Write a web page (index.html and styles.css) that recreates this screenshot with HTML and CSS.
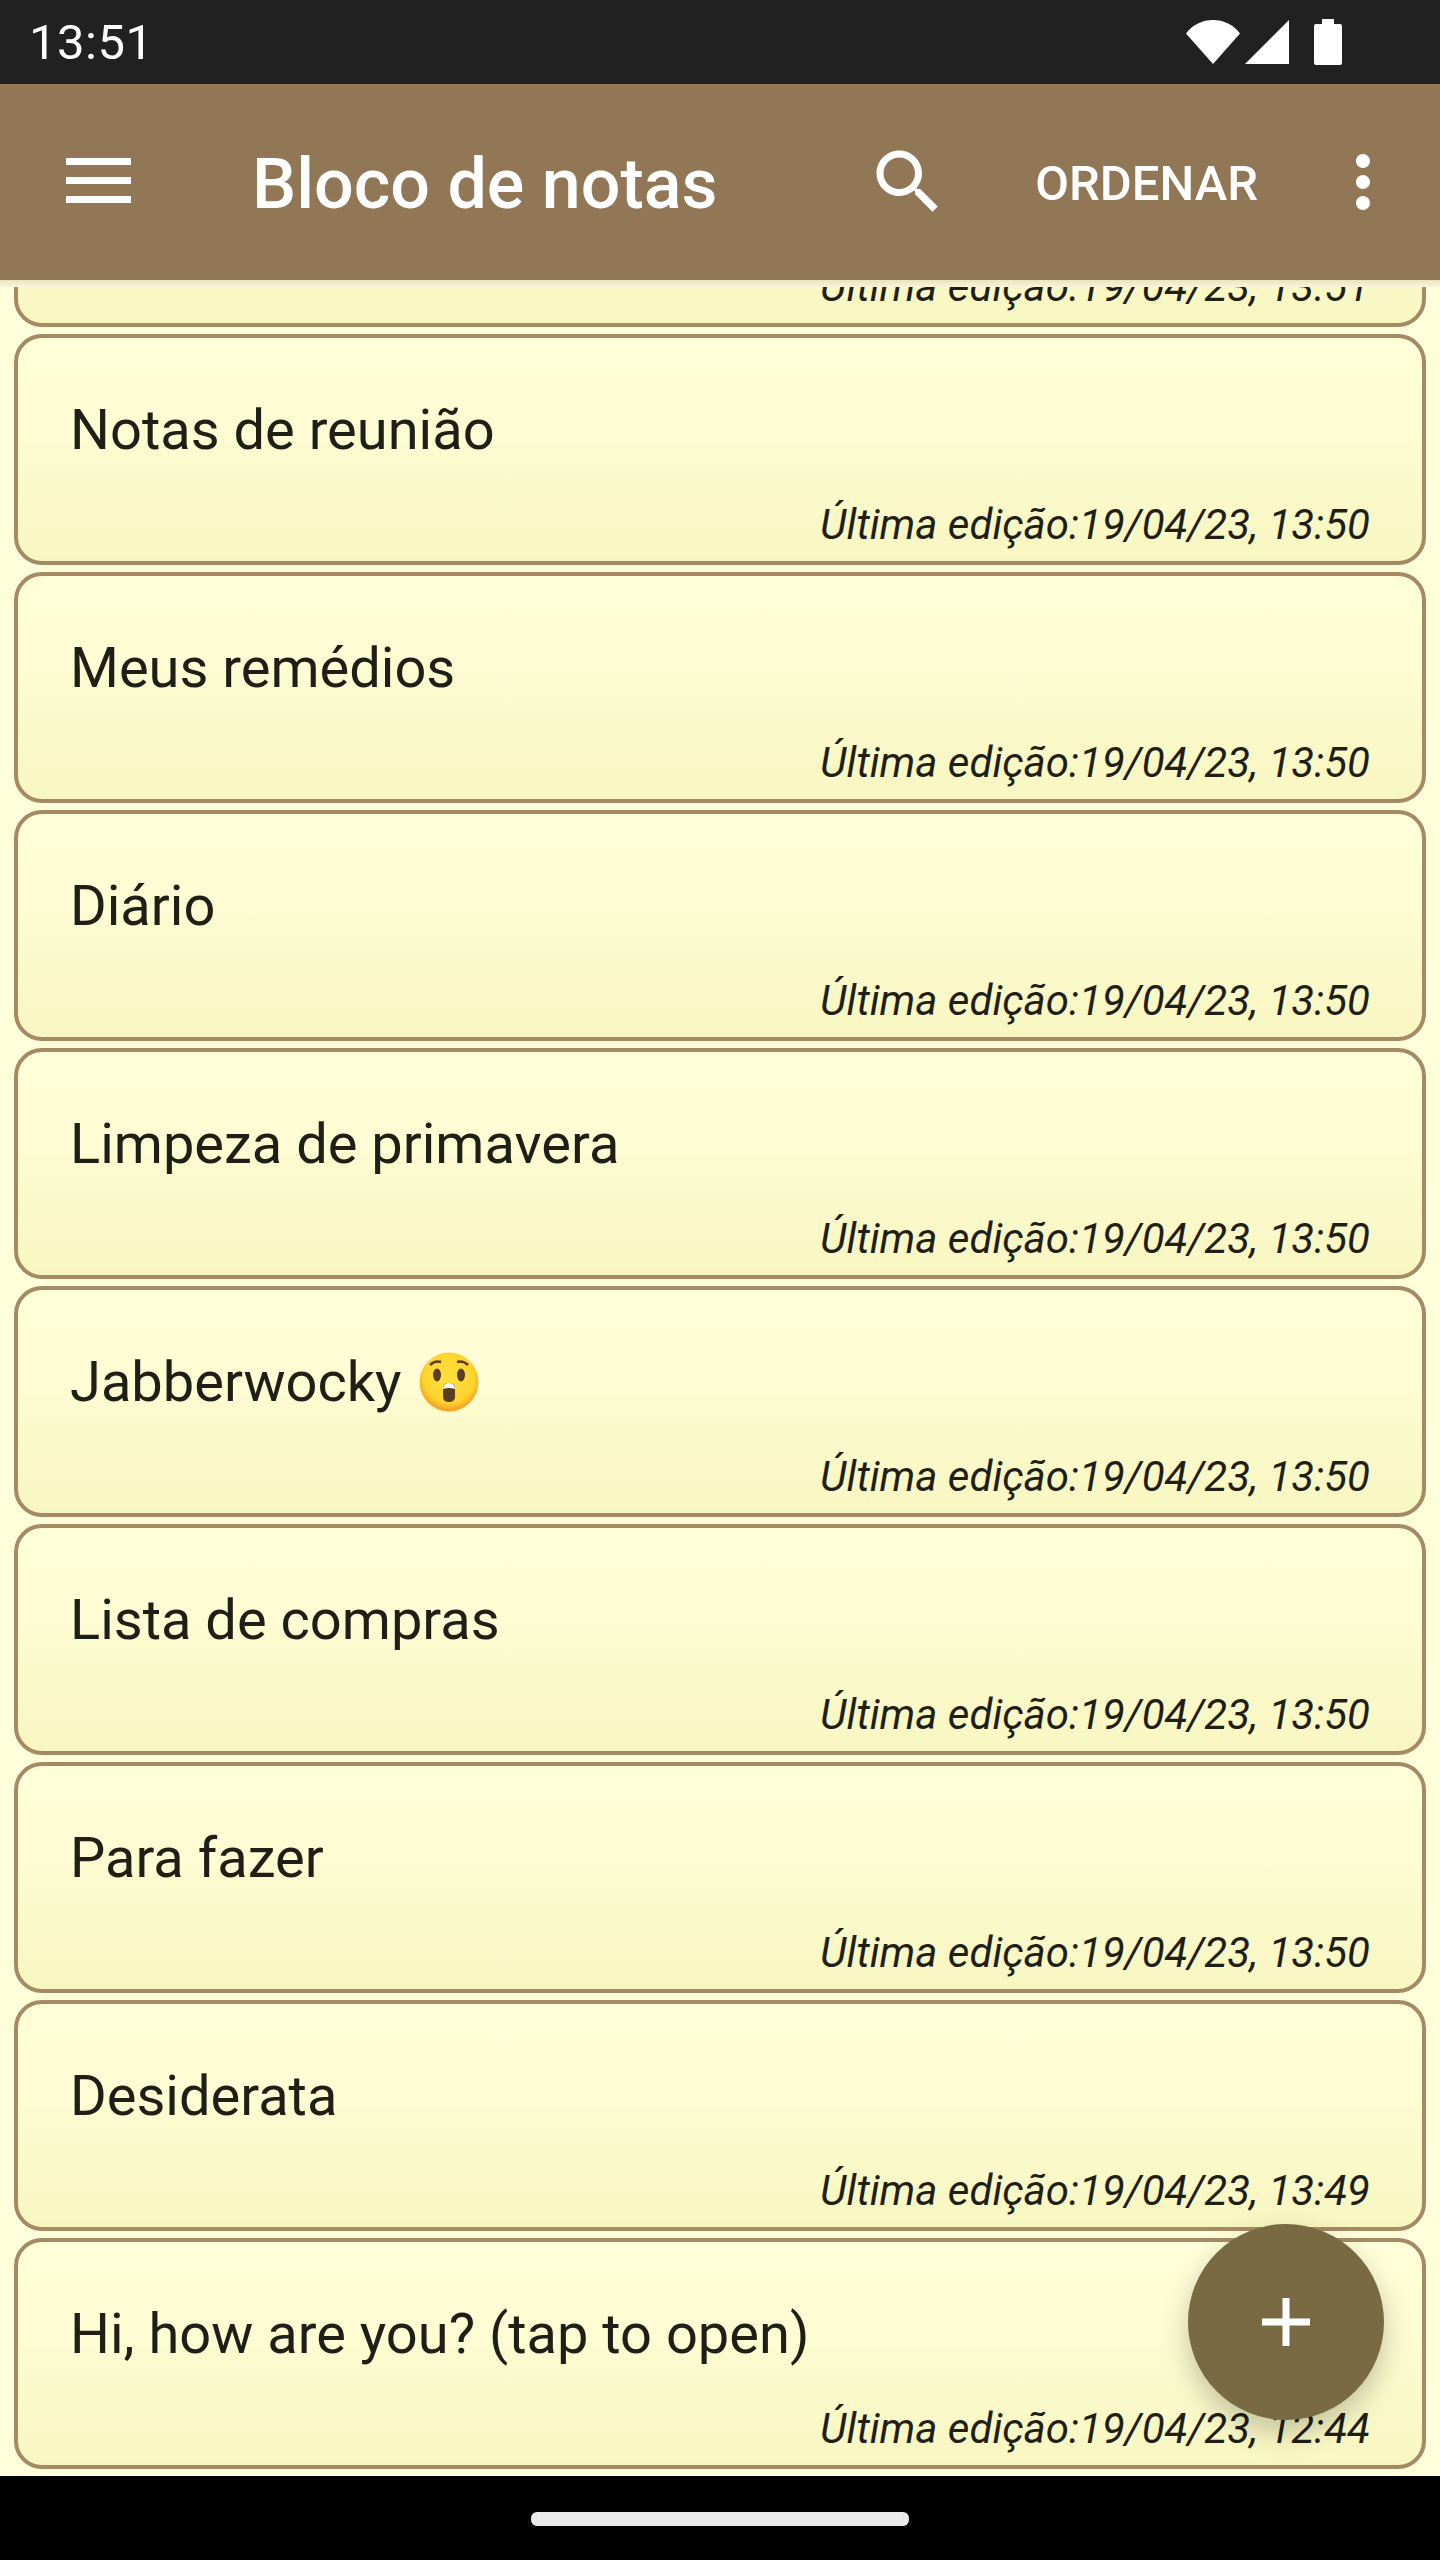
FILE: index.html
```html
<!DOCTYPE html>
<html lang="pt">
<head>
    <meta charset="UTF-8">
    <meta name="viewport" content="width=device-width, initial-scale=1.0">
    <title>Bloco de notas</title>
    <link rel="stylesheet" href="styles.css">
</head>
<body>
    <div class="screen">

        <!-- Status bar -->
        <div class="status-bar">
            <span class="status-time">13:51</span>
            <div class="status-icons">
                <svg class="wifi-icon" width="54" height="46" viewBox="0 0 54 46"><path d="M0 14.500C7 5.500 16 1 27 1s20 4.500 27 13.500L27 45z" fill="#fff"/></svg>
                <svg class="signal-icon" width="44" height="44" viewBox="0 0 44 44"><path d="M44 0v44H0z" fill="#fff"/></svg>
                <svg class="battery-icon" width="28" height="46" viewBox="0 0 28 46"><path d="M8 0h12v5h6a2 2 0 0 1 2 2v37a2 2 0 0 1-2 2H2a2 2 0 0 1-2-2V7a2 2 0 0 1 2-2h6z" fill="#fff"/></svg>
            </div>
        </div>

        <!-- Toolbar -->
        <div class="toolbar">
            <svg class="menu-icon" width="84" height="84" viewBox="0 0 84 84"><path d="M10 18h65v7H10zM10 37h65v7H10zM10 56h65v7H10z" fill="#fff"/></svg>
            <h1 class="toolbar-title">Bloco de notas</h1>
            <svg class="search-icon" width="84" height="84" viewBox="0 0 24 24"><path d="M15.500 14h-.79l-.28-.27C15.410 12.590 16 11.110 16 9.500 16 5.910 13.090 3 9.500 3S3 5.910 3 9.500 5.910 16 9.500 16c1.610 0 3.090-.59 4.230-1.570l.27.28v.79l5 4.990L20.490 19l-4.990-5zm-6 0C7.010 14 5 11.990 5 9.500S7.010 5 9.500 5 14 7.010 14 9.500 11.990 14 9.500 14z" fill="#fff"/></svg>
            <span class="toolbar-action">ORDENAR</span>
            <svg class="more-icon" width="84" height="84" viewBox="0 0 24 24"><path d="M12 8c1.100 0 2-.9 2-2s-.9-2-2-2-2 .9-2 2 .9 2 2 2zm0 2c-1.100 0-2 .9-2 2s.9 2 2 2 2-.9 2-2-.9-2-2-2zm0 6c-1.100 0-2 .9-2 2s.9 2 2 2 2-.9 2-2-.9-2-2-2z" fill="#fff"/></svg>
        </div>
        <div class="toolbar-shadow"></div>

        <!-- Notes, the list is scrolled so the first card is cut off at the top -->
        <div class="note-list">
            <div class="note">
                <span class="note-date">Última edição:19/04/23, 13:51</span>
            </div>
            <div class="note">
                <span class="note-title">Notas de reunião</span>
                <span class="note-date">Última edição:19/04/23, 13:50</span>
            </div>
            <div class="note">
                <span class="note-title">Meus remédios</span>
                <span class="note-date">Última edição:19/04/23, 13:50</span>
            </div>
            <div class="note">
                <span class="note-title">Diário</span>
                <span class="note-date">Última edição:19/04/23, 13:50</span>
            </div>
            <div class="note">
                <span class="note-title">Limpeza de primavera</span>
                <span class="note-date">Última edição:19/04/23, 13:50</span>
            </div>
            <div class="note">
                <span class="note-title">Jabberwocky
                    <svg class="emoji" width="66" height="66" viewBox="0 0 66 66">
                        <defs>
                            <radialGradient id="emojiFace" cx="50%" cy="42%" r="55%">
                                <stop offset="0%" stop-color="#fde13a"/>
                                <stop offset="78%" stop-color="#fdd32f"/>
                                <stop offset="100%" stop-color="#f5a623"/>
                            </radialGradient>
                        </defs>
                        <circle cx="33" cy="33" r="29.500" fill="url(#emojiFace)"/>
                        <ellipse cx="21" cy="26" rx="4" ry="6.500" fill="#5a3f1e"/>
                        <ellipse cx="45" cy="26" rx="4" ry="6.500" fill="#5a3f1e"/>
                        <path d="M14 16c3-3 7-4 11-3M41 13c4-1 8 0 11 3" fill="none" stroke="#5a3f1e" stroke-width="2.500"/>
                        <path d="M27 39c0-3 2.500-5 6-5s6 2 6 5v9c0 3-2.500 5-6 5s-6-2-6-5z" fill="#5a3f1e"/>
                        <path d="M27 40c0-3.500 2.500-6 6-6s6 2.500 6 6c-3.500-1.500-8.500-1.500-12 0z" fill="#fff"/>
                    </svg>
                </span>
                <span class="note-date">Última edição:19/04/23, 13:50</span>
            </div>
            <div class="note">
                <span class="note-title">Lista de compras</span>
                <span class="note-date">Última edição:19/04/23, 13:50</span>
            </div>
            <div class="note">
                <span class="note-title">Para fazer</span>
                <span class="note-date">Última edição:19/04/23, 13:50</span>
            </div>
            <div class="note">
                <span class="note-title">Desiderata</span>
                <span class="note-date">Última edição:19/04/23, 13:49</span>
            </div>
            <div class="note">
                <span class="note-title">Hi, how are you? (tap to open)</span>
                <span class="note-date">Última edição:19/04/23, 12:44</span>
            </div>
        </div>

        <!-- Add note button -->
        <button class="fab" type="button">
            <svg width="48" height="48" viewBox="0 0 48 48"><path d="M20.500 0h7v20.500H48v7H27.500V48h-7V27.500H0v-7h20.500z" fill="#fff"/></svg>
        </button>

        <!-- Navigation bar -->
        <div class="nav-bar">
            <div class="nav-handle"></div>
        </div>
    </div>
</body>
</html>
```

FILE: styles.css
```css
html, body {
    margin: 0;
    padding: 0;
}
body {
    font-family: Roboto, "Liberation Sans", sans-serif;
    background-color: #000;
}
.screen {
    position: relative;
    display: flex;
    flex-direction: column;
    width: 1440px;
    height: 2560px;
    overflow: hidden;
    background-color: #fefedb;
}
.status-bar {
    display: flex;
    align-items: center;
    justify-content: space-between;
    flex-shrink: 0;
    height: 84px;
    padding: 0 98px 0 29px;
    box-sizing: border-box;
    background-color: #212121;
}
.status-time {
    font-size: 49px;
    letter-spacing: 0.5px;
    color: #fff;
}
.status-icons {
    display: flex;
    align-items: center;
    gap: 5px;
}
.battery-icon {
    margin-left: 20px;
}
.toolbar {
    display: flex;
    align-items: center;
    flex-shrink: 0;
    height: 196px;
    padding: 0 35px 0 56px;
    box-sizing: border-box;
    background-color: #917755;
}
.toolbar-title {
    margin: 0 0 0 112px;
    padding-top: 4px;
    font-size: 70px;
    font-weight: 500;
    color: #fff;
}
.search-icon {
    margin-left: auto;
}
.toolbar-action {
    margin: 0 63px 0 85px;
    padding-top: 2px;
    font-size: 49px;
    font-weight: 500;
    color: #fff;
}
.toolbar-shadow {
    flex-shrink: 0;
    height: 7px;
    background: linear-gradient(#e7e3c5, #f8f6d2);
}
.note-list {
    display: flex;
    flex-direction: column;
    justify-content: flex-end;
    gap: 7px;
    flex: 1;
    min-height: 0;
    padding: 0 14px 7px;
    overflow: hidden;
}
.note {
    display: flex;
    flex-direction: column;
    flex-shrink: 0;
    height: 231px;
    padding: 59px 52px 12px 52px;
    box-sizing: border-box;
    border: 4px solid #a68a64;
    border-radius: 28px;
    background: linear-gradient(#fefed9, #fdfcd3 40%, #f8f6c0);
    color: #1f1f17;
}
.note-title {
    display: flex;
    align-items: center;
    gap: 14px;
    font-size: 56px;
    line-height: 66px;
}
.emoji {
    flex-shrink: 0;
}
.note-date {
    margin-top: auto;
    align-self: flex-end;
    font-size: 42px;
    font-style: italic;
    line-height: 49px;
}
.fab {
    position: absolute;
    left: 1188px;
    top: 2224px;
    display: flex;
    align-items: center;
    justify-content: center;
    width: 196px;
    height: 196px;
    padding: 0;
    border: none;
    border-radius: 50%;
    background-color: #7a6a44;
    box-shadow: 0 12px 28px rgba(0, 0, 0, 0.22);
}
.nav-bar {
    display: flex;
    align-items: center;
    justify-content: center;
    flex-shrink: 0;
    height: 84px;
    background-color: #000;
}
.nav-handle {
    width: 378px;
    height: 14px;
    margin-top: 1px;
    border-radius: 6px;
    background-color: #eaeaea;
}
```
